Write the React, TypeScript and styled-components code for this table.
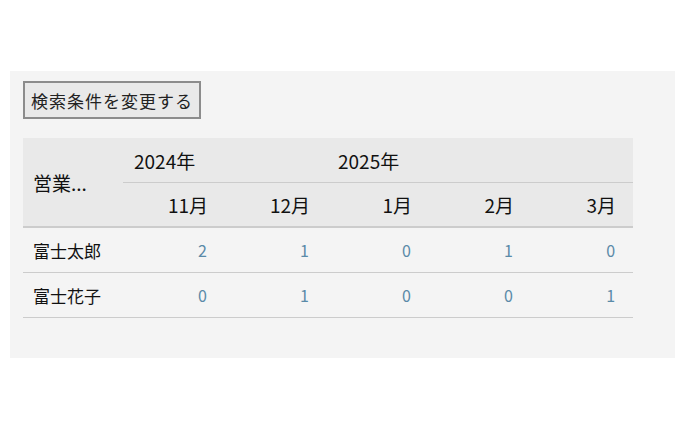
import React from "react";
import styled, { createGlobalStyle } from "styled-components";

const Global = createGlobalStyle`
  html, body { margin: 0; padding: 0; background: #ffffff; }
  body { font-family: "Noto Sans CJK JP", "Noto Sans", sans-serif; color: #111; }
`;

const Page = styled.div`
  padding: 71px 11px 0 10px;
`;

const Panel = styled.section`
  background: #f4f4f4;
  padding: 10px 13px 40px;
  display: flex;
  flex-direction: column;
  align-items: flex-start;
  gap: 19px;
`;

const SearchButton = styled.button`
  font-family: inherit;
  font-size: 17px;
  line-height: 1;
  height: 38px;
  padding: 0 6px;
  background: #e9e9e9;
  color: #222;
  border: 2px solid #8c8c8c;
  border-radius: 0;
  letter-spacing: 1px;
`;

const Table = styled.table`
  width: 610px;
  border-collapse: collapse;
  table-layout: fixed;
`;

const NameCol = styled.col`
  width: 100px;
`;

const MonthCol = styled.col`
  width: 102px;
`;

const Head = styled.thead`
  background: #e9e9e9;
  border-bottom: 2px solid #cccccc;
`;

const NameHeader = styled.th`
  text-align: left;
  font-weight: normal;
  font-size: 19px;
  padding: 0 10px;
  white-space: nowrap;
`;

const YearHeader = styled.th`
  height: 44px;
  text-align: left;
  font-weight: normal;
  font-size: 19px;
  padding: 0 11px;
  border-bottom: 1px solid #cccccc;
`;

const MonthHeader = styled.th`
  height: 43px;
  text-align: right;
  font-weight: normal;
  font-size: 19px;
  padding: 0 17px 0 0;
`;

const Row = styled.tr`
  border-bottom: 1px solid #cccccc;
`;

const NameCell = styled.td`
  height: 44px;
  padding: 0 10px;
  font-size: 17px;
  white-space: nowrap;
`;

const CountCell = styled.td`
  text-align: right;
  padding: 0 18px 0 0;
  font-size: 16px;
  color: #5a8aa8;
`;

const months = ["11月", "12月", "1月", "2月", "3月"];
const rows = [
  { name: "富士太郎", counts: [2, 1, 0, 1, 0] },
  { name: "富士花子", counts: [0, 1, 0, 0, 1] },
];

export default function App() {
  return (
    <>
      <Global />
      <Page>
        <Panel>
          <SearchButton>検索条件を変更する</SearchButton>
          <Table>
            <colgroup>
              <NameCol />
              {months.map((m) => (
                <MonthCol key={m} />
              ))}
            </colgroup>
            <Head>
              <tr>
                <NameHeader rowSpan={2}>営業...</NameHeader>
                <YearHeader colSpan={2}>2024年</YearHeader>
                <YearHeader colSpan={3}>2025年</YearHeader>
              </tr>
              <tr>
                {months.map((m) => (
                  <MonthHeader key={m}>{m}</MonthHeader>
                ))}
              </tr>
            </Head>
            <tbody>
              {rows.map((r) => (
                <Row key={r.name}>
                  <NameCell>{r.name}</NameCell>
                  {r.counts.map((c, i) => (
                    <CountCell key={i}>{c}</CountCell>
                  ))}
                </Row>
              ))}
            </tbody>
          </Table>
        </Panel>
      </Page>
    </>
  );
}
